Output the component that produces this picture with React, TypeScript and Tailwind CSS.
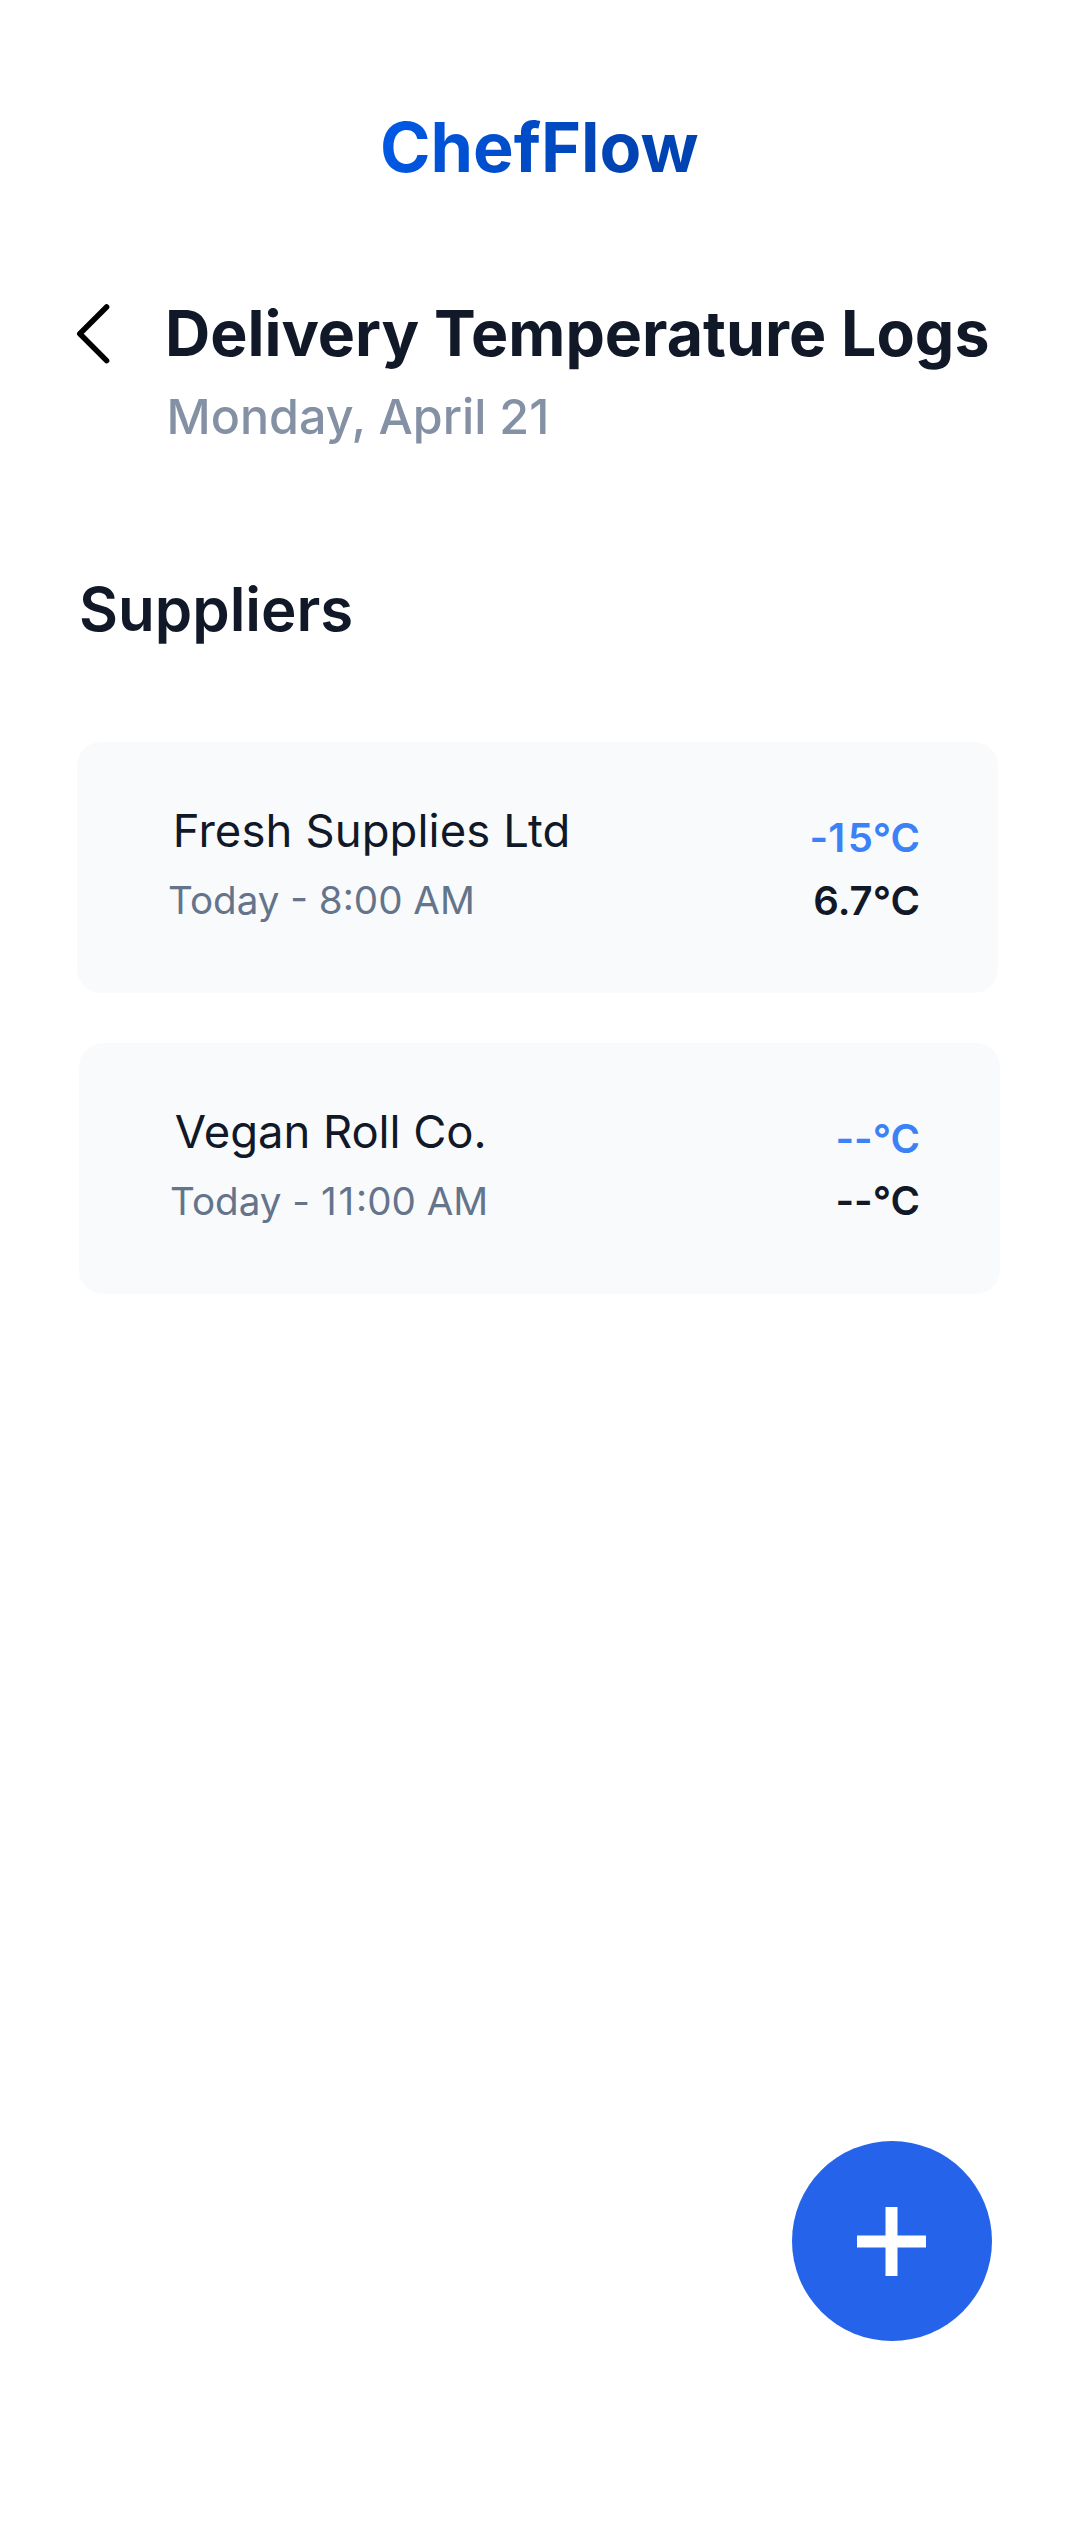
const suppliers = [
  {
    name: 'Fresh Supplies Ltd',
    time: <>Today - 8:00 AM</>,
    frozen: <>-<span className="tracking-[2.5px]">1</span>5°C</>,
    chilled: <>6.7°C</>,
    card: 'ml-[77px] pr-[78px]',
    title: 'tracking-[0.13px]',
    gap: 'mt-[14px]',
  },
  {
    name: 'Vegan Roll Co.',
    time: <>Today - <span className="tracking-[1.9px]">11</span>:00 AM</>,
    frozen: <>--°C</>,
    chilled: <>--°C</>,
    card: 'ml-[79px] pr-[80px]',
    title: 'tracking-[-0.05px]',
    gap: 'mt-[13px]',
  },
];

export default function App() {
  return (
    <div className="relative h-[2542px] w-[1080px] overflow-hidden bg-white font-['Inter',sans-serif] text-[#111827]">
      <header className="flex pt-[106px] pl-[380px]">
        <h1 className="bg-[linear-gradient(110deg,#005ae8_0%,#0043b2_75%)] bg-clip-text text-[68.3px] leading-[82px] font-bold text-transparent">ChefFlow</h1>
      </header>
      <div className="mt-[107px] flex">
        <button className="mt-[8px] ml-[75px] h-[64px] w-[36px]" aria-label="Back">
          <svg className="block" width="36" height="64" viewBox="0 0 36 64" fill="none" stroke="#000" strokeWidth="5.5" strokeLinecap="round" strokeLinejoin="round">
            <path d="M31.6 4 4.8 30.8l26.8 26.8" />
          </svg>
        </button>
        <div className="ml-[54px] whitespace-nowrap">
          <h2 className="text-[62.6px] leading-[76px] font-bold">Delivery Temperature Logs</h2>
          <p className="mt-[16px] ml-[1.5px] text-[48.4px] leading-[59px] font-medium text-[#8491a5]">Monday, April 21</p>
        </div>
      </div>
      <h3 className="mt-[127px] ml-[79px] text-[60px] leading-[72px] font-semibold">Suppliers</h3>
      <div className="mt-[97px] flex flex-col gap-[50px]">
        {suppliers.map((s) => (
          <div key={s.name} className={`${s.card} flex h-[251px] w-[921px] justify-between rounded-[24px] bg-[#f9fafc]`}>
            <div className="pt-[61px] pl-[91px]">
              <p className={`${s.title} ml-[4.8px] text-[45.4px] leading-[55px] font-normal`}>{s.name}</p>
              <p className="mt-[19px] text-[38.6px] leading-[47px] font-normal text-[#64748b]">{s.time}</p>
            </div>
            <div className="pt-[71px] text-right text-[40.1px] leading-[49px] font-semibold">
              <p className="text-[#3b82f6]">{s.frozen}</p>
              <p className={s.gap}>{s.chilled}</p>
            </div>
          </div>
        ))}
      </div>
      <button aria-label="Add" className="absolute top-[2141px] left-[792px] flex size-[200px] items-start rounded-full bg-[#2563eb] pt-[66px] pl-[65px]">
        <svg className="block" width="69" height="69" viewBox="0 0 69 69" stroke="#fff" strokeWidth="12">
          <path d="M0 34.5h69M34.5 0v69" />
        </svg>
      </button>
    </div>
  );
}
